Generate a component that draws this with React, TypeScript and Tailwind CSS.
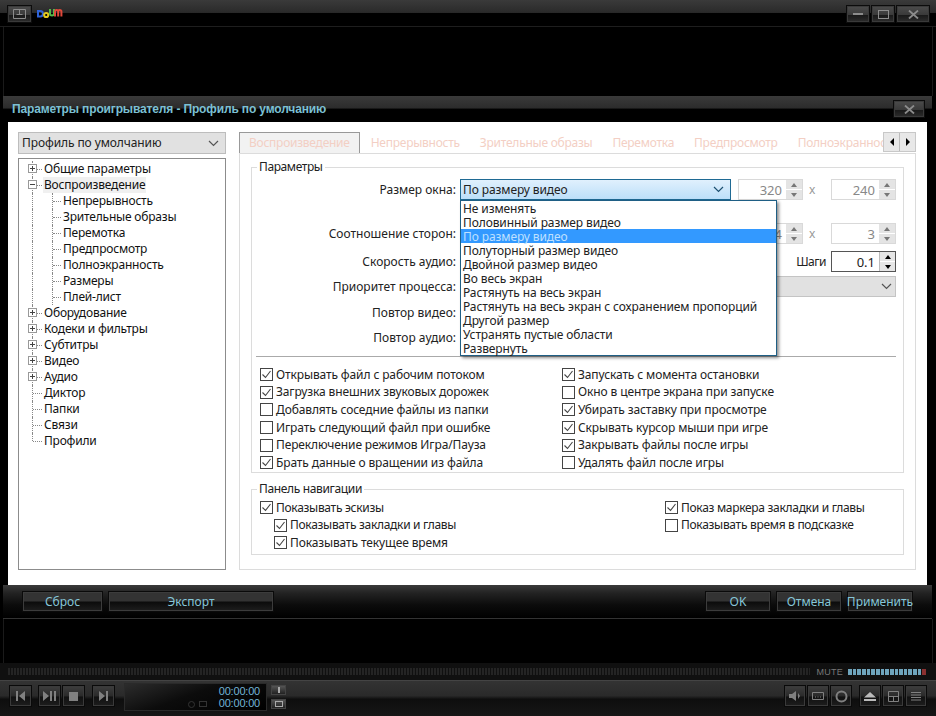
import type { ReactNode } from "react";

const font = "font-['Noto_Sans','Open_Sans','Liberation_Sans',sans-serif]";

function Chevron({ className = "text-[#555]" }: { className?: string }) {
  return (
    <svg width="11" height="7" viewBox="0 0 11 7" className={className}>
      <path d="M1 1l4.5 4.5L10 1" fill="none" stroke="currentColor" strokeWidth="1.2" />
    </svg>
  );
}

function Check({ on, label, tight }: { on?: boolean; label: string; tight?: boolean }) {
  return (
    <div className={`flex h-[17.6px] items-center gap-[3px] whitespace-nowrap text-[#222] ${tight ? "tracking-[-0.3px]" : "tracking-[-0.12px]"}`}>
      <span className="flex h-[13px] w-[13px] shrink-0 items-center justify-center border border-[#444] bg-white">
        {on && (
          <svg width="11" height="11" viewBox="0 0 11 11">
            <path d="M1.5 5.5l3 3 5-6.5" fill="none" stroke="#444" strokeWidth="1.1" />
          </svg>
        )}
      </span>
      {label}
    </div>
  );
}

function Spinner({ value, active }: { value: string; active?: boolean }) {
  return (
    <div className={`flex h-[21px] w-[65px] items-center border bg-white ${active ? "border-[#555] text-[#222]" : "border-[#d9d9d9] text-[#888]"}`}>
      <span className="flex-1 pr-1 text-right text-[13px]">{value}</span>
      <div className={`flex h-full w-4 flex-col gap-px ${active ? "border-l border-[#bbb]" : ""} bg-white`}>
        <span className={`flex flex-1 items-center justify-center ${active ? "bg-[#e6e6e6] text-black" : "bg-[#e4e4e4] text-[#777]"}`}>
          <span className="h-0 w-0 border-x-[3px] border-b-[4px] border-x-transparent border-b-current" />
        </span>
        <span className={`flex flex-1 items-center justify-center ${active ? "bg-[#e6e6e6] text-black" : "bg-[#e4e4e4] text-[#777]"}`}>
          <span className="h-0 w-0 border-x-[3px] border-t-[4px] border-x-transparent border-t-current" />
        </span>
      </div>
    </div>
  );
}

function Label({ children }: { children: ReactNode }) {
  return <div className="w-[205px] shrink-0 pr-[1px] text-right text-[#222]">{children}</div>;
}

function SizePair({ a, b }: { a: string; b: string }) {
  return (
    <div className="flex items-center">
      <Spinner value={a} />
      <span className="w-7 pl-[6px] text-[#999]">x</span>
      <Spinner value={b} />
    </div>
  );
}

const sizes = [
  "Не изменять",
  "Половинный размер видео",
  "По размеру видео",
  "Полуторный размер видео",
  "Двойной размер видео",
  "Во весь экран",
  "Растянуть на весь экран",
  "Растянуть на весь экран с сохранением пропорций",
  "Другой размер",
  "Устранять пустые области",
  "Развернуть",
];

const leftChecks: [string, boolean][] = [
  ["Открывать файл с рабочим потоком", true],
  ["Загрузка внешних звуковых дорожек", true],
  ["Добавлять соседние файлы из папки", false],
  ["Играть следующий файл при ошибке", false],
  ["Переключение режимов Игра/Пауза", false],
  ["Брать данные о вращении из файла", true],
];

const rightChecks: [string, boolean][] = [
  ["Запускать с момента остановки", true],
  ["Окно в центре экрана при запуске", false],
  ["Убирать заставку при просмотре", true],
  ["Скрывать курсор мыши при игре", true],
  ["Закрывать файлы после игры", true],
  ["Удалять файл после игры", false],
];

function Expander({ open }: { open?: boolean }) {
  return (
    <span className="absolute left-[9px] top-[3px] z-10 flex h-[9px] w-[9px] items-center justify-center border border-[#999] bg-white">
      <span className="absolute h-px w-[5px] bg-[#444]" />
      {!open && <span className="absolute h-[5px] w-px bg-[#444]" />}
    </span>
  );
}

function TreeRow({ text, kind, selected, last }: { text: string; kind: "plus" | "minus" | "leaf" | "child"; selected?: boolean; last?: boolean }) {
  const child = kind === "child";
  return (
    <div className={`relative h-4 leading-4 text-[#111] ${child ? "pl-[43px]" : "pl-[24px]"}`}>
      {!last && <span className="absolute bottom-0 left-[13px] top-0 border-l border-dotted border-[#888]" />}
      {last && <span className="absolute left-[13px] top-0 h-2 border-l border-dotted border-[#888]" />}
      {child && <span className="absolute bottom-0 left-[33px] top-0 border-l border-dotted border-[#888]" />}
      <span className={`absolute top-2 border-t border-dotted border-[#888] ${child ? "left-[34px] w-[8px]" : "left-[14px] w-[9px]"}`} />
      {kind === "plus" && <Expander />}
      {kind === "minus" && <Expander open />}
      <span className={`relative inline-block px-[1px] ${selected ? "bg-[#f0f0f0]" : ""}`}>{text}</span>
    </div>
  );
}

function Tab({ text, active }: { text: string; active?: boolean }) {
  return (
    <div className={`flex h-[21px] shrink-0 items-center px-[9px] text-[#f3cfc4] ${active ? "border border-b-0 border-[#999] bg-[#f2f2f2] text-[#f0c4b8]" : ""}`}>
      {text}
    </div>
  );
}

function DarkButton({ text, className }: { text: string; className: string }) {
  return (
    <div className={`flex h-[19px] items-center justify-center border border-[#3c3c3c] bg-[linear-gradient(#333_0,#333_45%,#0c0c0c_55%,#1c1c1c_100%)] text-[12px] text-[#86c6d8] shadow-[0_0_0_1px_#0a0a0a] ${className}`}>
      {text}
    </div>
  );
}

function CtrlButton({ children, className = "w-[21px]" }: { children: ReactNode; className?: string }) {
  return (
    <div className={`flex h-[20px] items-center justify-center border border-[#3a3a3a] bg-[linear-gradient(#3c3c3c,#2a2a2a_50%,#111_55%,#1c1c1c)] text-[#808080] shadow-[0_0_0_1px_#0a0a0a] ${className}`}>
      {children}
    </div>
  );
}

function WinButton({ children, className }: { children: ReactNode; className: string }) {
  return (
    <div className={`flex h-[16px] items-center justify-center border border-[#3a3a3a] bg-[linear-gradient(#4a4a4a,#3a3a3a_55%,#1a1a1a_60%,#2a2a2a)] text-[#8c8c8c] shadow-[0_0_0_1px_#0c0c0c] ${className}`}>
      {children}
    </div>
  );
}

function CrossIcon() {
  return (
    <svg width="11" height="9" viewBox="0 0 11 9">
      <path d="M1 0.5l9 8M10 0.5l-9 8" stroke="currentColor" strokeWidth="1.8" />
    </svg>
  );
}

function DaumLogo() {
  return (
    <svg width="28" height="11" viewBox="0 0 28 11" fill="none" strokeWidth="2">
      <path d="M1 3h2.2a2.4 2.4 0 0 1 0 5.5H1z" stroke="#2f63d8" />
      <circle cx="9.2" cy="7" r="2.1" stroke="#e4c81e" />
      <path d="M13 1v4.5a2 2 0 0 0 4 0V1" stroke="#55b84a" />
      <path d="M18 8.5V3.6a1.6 1.6 0 0 1 3.2 0v4.9M21.2 3.6a1.6 1.6 0 0 1 3.2 0v4.9" stroke="#e0483a" />
    </svg>
  );
}

export default function App() {
  return (
    <div className={`flex h-[716px] w-[936px] flex-col overflow-hidden bg-black text-[12px] leading-4 ${font}`}>
      {/* player title bar */}
      <div className="flex h-[27px] shrink-0 items-start border-b border-[#1e1e1e] bg-[linear-gradient(#3a3a3a_0,#2a2a2a_48%,#000_50%)] pl-2 pr-[7px] pt-[6px]">
        <WinButton className="w-[23px]">
          <svg width="13" height="10" viewBox="0 0 13 10" fill="none" stroke="currentColor">
            <path d="M.5.5h12v9H.5zM3.5 5.5h6M6.5.5v5" />
          </svg>
        </WinButton>
        <div className="ml-[6px] mt-[2px]">
          <DaumLogo />
        </div>
        <div className="ml-auto flex gap-[3px]">
          <WinButton className="w-[22px]">
            <span className="h-[2px] w-[10px] bg-current" />
          </WinButton>
          <WinButton className="w-[22px]">
            <span className="h-[9px] w-[11px] border border-current" />
          </WinButton>
          <WinButton className="w-[32px]">
            <CrossIcon />
          </WinButton>
        </div>
      </div>

      <div className="mx-[3px] h-[69px] shrink-0 border-x border-[#1a1a1a]" />

      {/* dialog */}
      <div className="mx-[3px] flex h-[523px] w-[929px] shrink-0 flex-col border-b border-[#333]">
        <div className="flex h-[26px] shrink-0 items-start bg-[linear-gradient(#3a3a3a_0,#2c2c2c_45%,#000_52%)] pl-[9px] pr-[8px]">
          <span className="mt-[5px] text-[12px] font-bold leading-4 tracking-[-0.14px] text-[#7cc0d4] font-['Liberation_Sans',sans-serif]">
            Параметры проигрывателя - Профиль по умолчанию
          </span>
          <WinButton className="ml-auto mt-[5px] w-[30px]">
            <CrossIcon />
          </WinButton>
        </div>

        <div className="mx-[5px] flex h-[463px] shrink-0 bg-white pl-[10px] pt-[10px]">
          {/* left column */}
          <div className="flex w-[208px] shrink-0 flex-col">
            <div className="flex h-[22px] items-center justify-between border border-[#bdbdbd] bg-[#e1e1e1] pl-[3px] pr-[6px] text-[12px] tracking-[-0.1px] text-[#222]">
              Профиль по умолчанию
              <Chevron />
            </div>
            <div className="mt-[4px] h-[412px] border border-[#8c8c8c] pt-[2px] text-[12px] tracking-[-0.2px]">
              <TreeRow text="Общие параметры" kind="plus" />
              <TreeRow text="Воспроизведение" kind="minus" selected />
              <TreeRow text="Непрерывность" kind="child" />
              <TreeRow text="Зрительные образы" kind="child" />
              <TreeRow text="Перемотка" kind="child" />
              <TreeRow text="Предпросмотр" kind="child" />
              <TreeRow text="Полноэкранность" kind="child" />
              <TreeRow text="Размеры" kind="child" />
              <TreeRow text="Плей-лист" kind="child" />
              <TreeRow text="Оборудование" kind="plus" />
              <TreeRow text="Кодеки и фильтры" kind="plus" />
              <TreeRow text="Субтитры" kind="plus" />
              <TreeRow text="Видео" kind="plus" />
              <TreeRow text="Аудио" kind="plus" />
              <TreeRow text="Диктор" kind="leaf" />
              <TreeRow text="Папки" kind="leaf" />
              <TreeRow text="Связи" kind="leaf" />
              <TreeRow text="Профили" kind="leaf" last />
            </div>
          </div>

          {/* tabs */}
          <div className="ml-[13px] flex w-[677px] shrink-0 flex-col">
            <div className="relative flex h-[21px] shrink-0 gap-[2px] overflow-hidden text-[12px] tracking-[-0.25px]">
              <Tab text="Воспроизведение" active />
              <Tab text="Непрерывность" />
              <Tab text="Зрительные образы" />
              <Tab text="Перемотка" />
              <Tab text="Предпросмотр" />
              <Tab text="Полноэкранность" />
              <div className="absolute right-0 top-0 flex h-[20px] w-[33px] border border-[#c8c8c8] bg-[#e8e8e8]">
                <span className="flex flex-1 items-center justify-center border-r border-[#bbb]">
                  <span className="h-0 w-0 border-y-[4px] border-r-[4px] border-y-transparent border-r-black" />
                </span>
                <span className="flex flex-1 items-center justify-center">
                  <span className="h-0 w-0 border-y-[4px] border-l-[4px] border-y-transparent border-l-black" />
                </span>
              </div>
            </div>

            <div className="h-[417px] border border-[#dcdcdc] px-[11px] pt-[6px] text-[12px]">
              <fieldset className="h-[313px] border border-[#dcdcdc] pl-[0px] pr-[7px]">
                <legend className="ml-[5px] h-[14px] px-[2px] leading-[14px] tracking-[-0.4px] text-[#222]">Параметры</legend>
                <div className="mt-[5px] flex h-[21px] items-center">
                  <Label>Размер окна:</Label>
                  <div className="relative ml-[3px] flex h-[21px] w-[271px] items-center justify-between border border-[#1f6a94] bg-[linear-gradient(#e0f0fd,#bcdff9)] pl-[2px] pr-[6px] tracking-[-0.1px] text-[#222]">
                    По размеру видео
                    <Chevron className="text-[#1c4f70]" />
                    <div className="absolute left-[-1px] top-[20px] z-20 w-[317px] border border-[#1f5f85] bg-white shadow-[2px_2px_3px_rgba(0,0,0,0.45)]">
                      {sizes.map((s, i) => (
                        <div key={s} className={`h-[14px] whitespace-nowrap pl-[2px] leading-[16px] ${i === 2 ? "bg-[#3399ff] text-[#bfe0ff]" : "text-[#222]"}`}>
                          {s}
                        </div>
                      ))}
                    </div>
                  </div>
                  <div className="ml-[7px]">
                    <SizePair a="320" b="240" />
                  </div>
                </div>
                <div className="mt-[23px] flex h-[21px] items-center">
                  <Label>Соотношение сторон:</Label>
                  <div className="ml-[281px]">
                    <SizePair a="4" b="3" />
                  </div>
                </div>
                <div className="mt-[7px] flex h-[21px] items-center">
                  <Label>Скорость аудио:</Label>
                  <span className="ml-auto mr-[5px] tracking-[-0.5px] text-[#222]">Шаги</span>
                  <Spinner value="0.1" active />
                </div>
                <div className="mt-[4px] flex h-[21px] items-center">
                  <Label>Приоритет процесса:</Label>
                  <div className="ml-[3px] flex h-[21px] flex-1 items-center justify-end border border-[#c4c4c4] bg-[#e1e1e1] pr-[3px]">
                    <Chevron />
                  </div>
                </div>
                <div className="mt-[6px] flex h-[20px] items-center">
                  <Label>Повтор видео:</Label>
                </div>
                <div className="mt-[5px] flex h-[20px] items-center">
                  <Label>Повтор аудио:</Label>
                </div>
                <div className="ml-[4px] mt-[8px] border-t border-[#aaa]" />
                <div className="mt-[9px] flex pl-[8px]">
                  <div className="w-[302px]">
                    {leftChecks.map(([t, on]) => (
                      <Check key={t} label={t} on={on} />
                    ))}
                  </div>
                  <div>
                    {rightChecks.map(([t, on]) => (
                      <Check key={t} label={t} on={on} />
                    ))}
                  </div>
                </div>
              </fieldset>

              <fieldset className="mt-[9px] h-[73px] border border-[#dcdcdc]">
                <legend className="ml-[5px] h-[14px] px-[2px] leading-[14px] tracking-[-0.35px] text-[#222]">Панель навигации</legend>
                <div className="mt-[3px] flex pl-[8px]">
                  <div className="w-[405px]">
                    <Check label="Показывать эскизы" on tight />
                    <div className="pl-[14px]">
                      <Check label="Показывать закладки и главы" on tight />
                      <Check label="Показывать текущее время" on />
                    </div>
                  </div>
                  <div>
                    <Check label="Показ маркера закладки и главы" on tight />
                    <Check label="Показывать время в подсказке" tight />
                  </div>
                </div>
              </fieldset>
            </div>
          </div>
        </div>

        <div className="flex flex-1 items-start bg-[linear-gradient(#3a3a3a_0,#222_25%,#0c0c0c_60%,#000)] pl-[20px] pr-[20px] pt-[7px]">
          <DarkButton text="Сброс" className="w-[79px]" />
          <DarkButton text="Экспорт" className="ml-[7px] w-[164px]" />
          <DarkButton text="OK" className="ml-auto w-[64px]" />
          <DarkButton text="Отмена" className="ml-[7px] w-[64px]" />
          <DarkButton text="Применить" className="ml-[7px] w-[64px]" />
        </div>
      </div>

      <div className="mx-[3px] flex-1 border-x border-[#1a1a1a]" />

      {/* seek strip */}
      <div className="flex h-[17px] shrink-0 items-center bg-[#101010] pl-2 pr-[10px]">
        <div className="h-[7px] flex-1 bg-[repeating-linear-gradient(90deg,#242424_0,#242424_2px,#101010_2px,#101010_3px)]" />
        <span className="ml-[6px] text-[9px] leading-3 tracking-[0.3px] text-[#777] font-['Liberation_Sans',sans-serif]">MUTE</span>
        <div className="ml-[5px] flex gap-[1px]">
          {Array.from({ length: 17 }, (_, i) => (
            <span key={i} className={`h-[6px] w-[3.65px] ${i === 16 ? "bg-[#8a3030]" : "bg-[#6fa5bd]"}`} />
          ))}
        </div>
      </div>

      {/* transport */}
      <div className="flex h-[36px] shrink-0 items-start border-t border-[#444] bg-[linear-gradient(#333_0,#2a2a2a_42%,#0e0e0e_52%,#161616)] pl-[10px] pr-[10px] pt-[5px]">
        <CtrlButton>
          <svg width="11" height="10" viewBox="0 0 11 10" fill="currentColor"><path d="M1 0h2v10H1zM10 0v10L4 5z" /></svg>
        </CtrlButton>
        <CtrlButton className="ml-[8px] w-[21px]">
          <svg width="13" height="10" viewBox="0 0 13 10" fill="currentColor"><path d="M0 0l6 5-6 5zM7 0h2v10H7zM11 0h2v10h-2z" /></svg>
        </CtrlButton>
        <CtrlButton className="ml-[3px] w-[21px]">
          <span className="h-[9px] w-[9px] bg-current" />
        </CtrlButton>
        <CtrlButton className="ml-[9px] w-[21px]">
          <svg width="11" height="10" viewBox="0 0 11 10" fill="currentColor"><path d="M1 0l6 5-6 5zM8 0h2v10H8z" /></svg>
        </CtrlButton>
        <div className="-mt-[3px] ml-[10px] flex h-[28px] w-[143px] items-center justify-end border border-[#2a2a2a] bg-[linear-gradient(160deg,#2c2c2c,#0c0c0c_45%,#000)] pr-[6px] text-[11px] leading-[11px] tracking-[-0.2px] text-[#72b4d6] font-['Liberation_Sans',sans-serif]">
          <div className="flex items-end gap-[12px]">
            <div className="mb-[1px] flex items-center gap-1">
              <span className="h-[7px] w-[7px] rounded-full border border-[#333]" />
              <span className="h-[6px] w-[8px] border border-[#333]" />
            </div>
            <div className="flex flex-col gap-[1px]">
              <span>00:00:00</span>
              <span>00:00:00</span>
            </div>
          </div>
        </div>
        <div className="-mt-[1px] ml-[4px] flex flex-col gap-[4px]">
          <span className="flex h-[10px] w-[15px] items-center justify-center border border-[#444] bg-[linear-gradient(#555,#222)] text-[#aaa]">
            <span className="h-[6px] w-[2px] bg-current" />
          </span>
          <span className="flex h-[10px] w-[15px] items-center justify-center border border-[#444] bg-[linear-gradient(#555,#222)] text-[#aaa]">
            <span className="h-[6px] w-[8px] border border-current" />
          </span>
        </div>
        <div className="ml-auto flex">
          <CtrlButton className="w-[20px]">
            <svg width="12" height="10" viewBox="0 0 12 10" fill="currentColor"><path d="M0 3h3l4-3v10L3 7H0zM9 2l2 3-2 3" /></svg>
          </CtrlButton>
          <CtrlButton className="ml-[3px] w-[20px]">
            <svg width="12" height="10" viewBox="0 0 12 10" fill="none" stroke="currentColor"><path d="M.5 1.5h11v7H.5z" /><path d="M3 6h1M5.5 6h1M8 6h1" /></svg>
          </CtrlButton>
          <CtrlButton className="ml-[3px] w-[20px]">
            <svg width="13" height="13" viewBox="0 0 13 13" fill="none" stroke="currentColor" strokeWidth="2"><circle cx="6.5" cy="6.5" r="5" /></svg>
          </CtrlButton>
          <CtrlButton className="ml-[9px] w-[20px]">
            <svg width="12" height="9" viewBox="0 0 12 9" fill="#bbb"><path d="M6 0l6 5.5H0zM0 7h12v2H0z" /></svg>
          </CtrlButton>
          <CtrlButton className="ml-[3px] w-[20px]">
            <svg width="11" height="11" viewBox="0 0 11 11" fill="none" stroke="currentColor"><path d="M.5.5h10v10H.5zM.5 5.5h10M5.5 5.5v5" /></svg>
          </CtrlButton>
          <CtrlButton className="ml-[3px] w-[20px]">
            <svg width="10" height="10" viewBox="0 0 10 10" stroke="currentColor"><path d="M0 1.5h10M0 4h10M0 6.5h10M0 9h10" /></svg>
          </CtrlButton>
        </div>
      </div>
    </div>
  );
}
